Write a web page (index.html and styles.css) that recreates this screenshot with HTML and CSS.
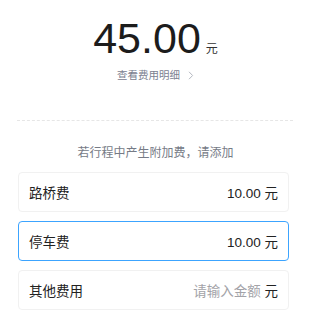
FILE: index.html
```html
<!DOCTYPE html>
<html lang="zh-CN">
<head>
  <meta charset="UTF-8" />
  <meta name="viewport" content="width=device-width, initial-scale=1.0" />
  <title>费用确认</title>
  <link rel="stylesheet" href="styles.css">
</head>
<body>
  <div class="summary">
    <div class="total">
      <span class="amount">45.00</span>
      <span class="unit">元</span>
    </div>
    <a class="detail" href="#">查看费用明细
      <svg class="chevron" width="6" height="9" viewBox="0 0 6 9">
        <path d="M1 0.8 L4.6 4.5 L1 8.2" fill="none" stroke="#b4b8c0" stroke-width="1"/>
      </svg>
    </a>
  </div>

  <div class="divider"></div>

  <p class="hint">若行程中产生附加费，请添加</p>

  <div class="fees">
    <div class="fee">
      <span class="label">路桥费</span>
      <span class="value">10.00 元</span>
    </div>
    <div class="fee active">
      <span class="label">停车费</span>
      <span class="value">10.00 元</span>
    </div>
    <div class="fee">
      <span class="label">其他费用</span>
      <span class="value"><span class="placeholder">请输入金额</span> 元</span>
    </div>
  </div>
</body>
</html>
```

FILE: styles.css
```css
body {
  margin: 0;
  background: #ffffff;
  color: #1f1f1f;
  font-family: 'Liberation Sans', 'Noto Sans CJK SC', sans-serif;
}

.summary {
  display: flex;
  flex-direction: column;
  align-items: center;
  padding-top: 13px;
}

.total {
  display: flex;
  align-items: baseline;
  gap: 5px;
}

.amount {
  font-size: 43px;
  line-height: 50px;
  color: #1c1c1c;
}

.unit {
  font-size: 12px;
  color: #333333;
}

.detail {
  display: flex;
  align-items: center;
  gap: 8px;
  margin-top: 4px;
  font-size: 10.5px;
  line-height: 16px;
  color: #7b8190;
  text-decoration: none;
}

.divider {
  margin: 37px 18px 0 17px;
  border-top: 1px dashed #e6e6e6;
}

.hint {
  margin: 24px 0 0;
  text-align: center;
  font-size: 12px;
  line-height: 16px;
  color: #767b86;
}

.fees {
  display: flex;
  flex-direction: column;
  gap: 9px;
  margin: 11px 22px 0 18px;
}

.fee {
  display: flex;
  justify-content: space-between;
  align-items: center;
  height: 40px;
  box-sizing: border-box;
  padding: 0 10px;
  border: 1px solid #f1f1f1;
  border-radius: 4px;
  font-size: 13.5px;
}

.fee.active {
  border-color: #3ca4ff;
}

.label {
  color: #222222;
}

.value {
  color: #222222;
}

.placeholder {
  color: #a3a3a8;
}
```
